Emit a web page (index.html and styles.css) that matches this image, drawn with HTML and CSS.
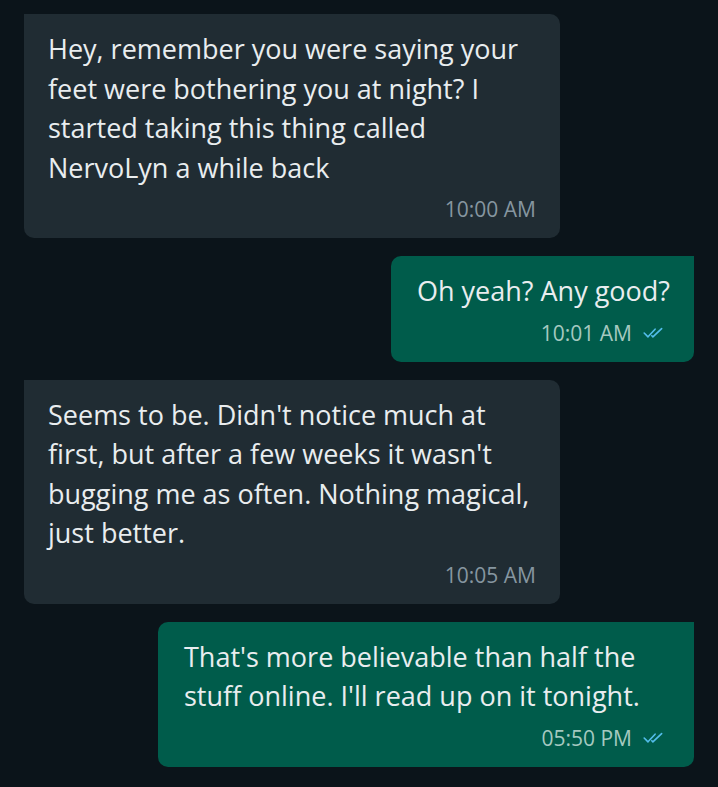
FILE: index.html
```html
<!DOCTYPE html>
<html lang="en">
<head>
    <meta charset="UTF-8">
    <meta name="viewport" content="width=device-width, initial-scale=1.0">
    <title>Chat</title>
    <link rel="stylesheet" href="styles.css">
</head>
<body>
    <div class="chat">
        <div class="msg in">
            <p class="text">Hey, remember you were saying your feet were bothering you at night? I started taking this thing called NervoLyn a while back</p>
            <div class="meta"><span class="time">10:00 AM</span></div>
        </div>

        <div class="msg out">
            <p class="text">Oh yeah? Any good?</p>
            <div class="meta">
                <span class="time">10:01 AM</span>
                <svg class="ticks" viewBox="0 0 20 11" width="22" height="12">
                    <polyline points="1,5.5 4.5,9 11,2" />
                    <polyline points="8,8 9,9 17,1.5" />
                </svg>
            </div>
        </div>

        <div class="msg in">
            <p class="text">Seems to be. Didn't notice much at first, but after a few weeks it wasn't bugging me as often. Nothing magical, just better.</p>
            <div class="meta"><span class="time">10:05 AM</span></div>
        </div>

        <div class="msg out">
            <p class="text">That's more believable than half the stuff online. I'll read up on it tonight.</p>
            <div class="meta">
                <span class="time">05:50 PM</span>
                <svg class="ticks" viewBox="0 0 20 11" width="22" height="12">
                    <polyline points="1,5.5 4.5,9 11,2" />
                    <polyline points="8,8 9,9 17,1.5" />
                </svg>
            </div>
        </div>
    </div>
</body>
</html>
```

FILE: styles.css
```css
body {
    margin: 0;
    background-color: #0b141a;
    font-family: "Open Sans", "Noto Sans", sans-serif;
}

.chat {
    display: flex;
    flex-direction: column;
    gap: 18px;
    padding: 14px 24px;
}

.msg {
    max-width: 536px;
    box-sizing: border-box;
    padding: 15px 24px 15px 24px;
    border-radius: 10px;
    color: #e9edef;
}

.msg.in {
    align-self: flex-start;
    background-color: #202c33;
    border-top-left-radius: 0;
}

.msg.out {
    align-self: flex-end;
    background-color: #005c4b;
    border-top-right-radius: 0;
    padding-left: 26px;
}

.text {
    margin: 0;
    font-size: 27px;
    line-height: 39.5px;
}

.meta {
    display: flex;
    justify-content: flex-end;
    align-items: center;
    gap: 11px;
    margin-top: 8px;
    height: 28px;
}

.time {
    font-size: 21px;
    color: #8696a0;
}

.out .time {
    color: #a5c9c0;
}

.ticks {
    margin-right: 5px;
    fill: none;
    stroke: #53bdeb;
    stroke-width: 1.5;
    stroke-linecap: round;
    stroke-linejoin: round;
}
```
